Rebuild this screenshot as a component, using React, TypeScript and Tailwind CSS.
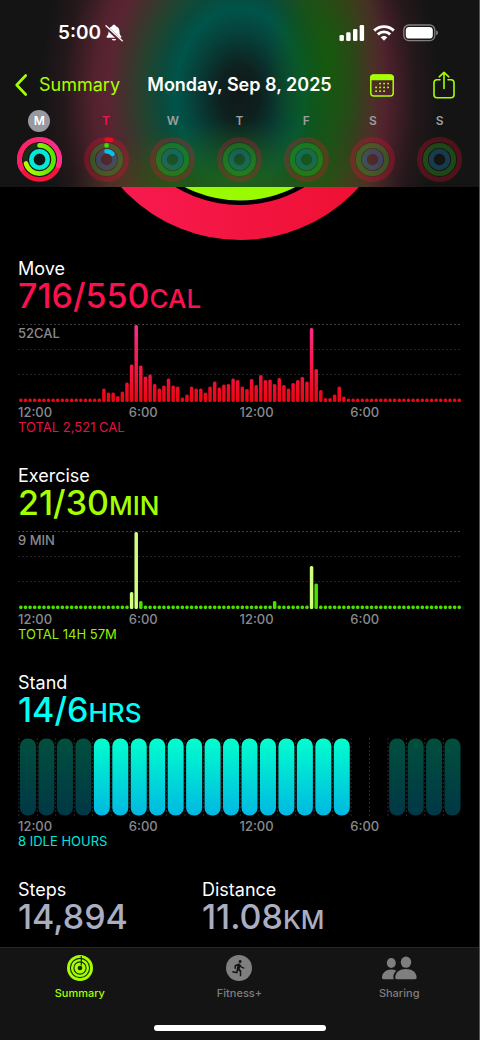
import type { ReactNode } from "react";
import clsx from "clsx";
import { MdDirectionsRun } from "react-icons/md";

const IDLE = 3.4;
const CHART_W = 443;
const CHART_H = 78;
const PITCH = CHART_W / 96;

const moveBars: number[] = [
  ...Array(18).fill(IDLE),
  13.5, 9.5, 9.5, 6, 10.5, 19.5, 37.5, 77, 36.5, 25.5, 27.5, 18, 13.5, 16.5,
  23.5, 16.5, 15.5, 4.5, 7.5, 15.5, 13.5, 13.5, 9.5, 15.5, 20.5, 14.5, 17.5,
  18, 23.5, 22, 15.5, 13, 23, 17, 27, 22, 22.5, 18, 24, 17, 13.5, 19, 22, 25,
  20.5, 74, 33, 12, 4, 4, 7.5, 15.5, 5.5,
  ...Array(25).fill(IDLE),
];

const exerciseValues: Record<number, number> = {
  24: 17,
  25: 77,
  26: 8,
  55: 8,
  63: 43,
  64: 25.5,
};
const exerciseBars = Array.from({ length: 96 }, (_, i) => exerciseValues[i] ?? IDLE);
const briskBars = [24, 25, 63];

type StandHour = "idle" | "stood" | "none";
const standHours: StandHour[] = [
  ...Array(4).fill("idle"),
  ...Array(14).fill("stood"),
  ...Array(2).fill("none"),
  ...Array(4).fill("idle"),
];

interface Day {
  letter: string;
  move: number;
  exercise: number;
  stand: number;
  selected?: boolean;
  today?: boolean;
}

const days: Day[] = [
  { letter: "M", move: 1.3, exercise: 0.7, stand: 1, selected: true },
  { letter: "T", move: 0.038, exercise: 0.001, stand: 0.13, today: true },
  { letter: "W", move: 0, exercise: 0, stand: 0 },
  { letter: "T", move: 0, exercise: 0, stand: 0 },
  { letter: "F", move: 0, exercise: 0, stand: 0 },
  { letter: "S", move: 0, exercise: 0, stand: 0 },
  { letter: "S", move: 0, exercise: 0, stand: 0 },
];

function Arc({ r, value, color }: { r: number; value: number; color: string }) {
  if (value <= 0) return null;
  const length = 2 * Math.PI * r;
  return (
    <circle
      cx="22.5"
      cy="22.5"
      r={r}
      fill="none"
      stroke={color}
      strokeWidth="4.6"
      strokeLinecap="round"
      strokeDasharray={`${Math.min(value, 1) * length} ${length}`}
      transform="rotate(-90 22.5 22.5)"
    />
  );
}

function MiniRings({ day }: { day: Day }) {
  const full = day.selected;
  return (
    <svg viewBox="0 0 45 45" className="size-[45px]" aria-hidden="true">
      <defs>
        <linearGradient id="miniMove" x1="1" y1="0.5" x2="0" y2="0.5">
          <stop offset="0" stopColor="#ff2d8c" />
          <stop offset="1" stopColor="#ff1f66" />
        </linearGradient>
        {/* strokes are rotated by -90deg, so y runs left to right on screen */}
        <linearGradient id="miniExercise" x1="0" y1="0" x2="0" y2="1">
          <stop offset="0" stopColor="#b4ff00" />
          <stop offset="1" stopColor="#55e600" />
        </linearGradient>
      </defs>
      <circle cx="22.5" cy="22.5" r="20" fill="none" stroke="#e8102f" strokeWidth="5" opacity="0.28" />
      <circle cx="22.5" cy="22.5" r="14.1" fill="none" stroke="#3bdc1e" strokeWidth="5" opacity={full ? 0.14 : 0.26} />
      <circle cx="22.5" cy="22.5" r="8.2" fill="none" stroke="#1ca0d8" strokeWidth="5" opacity="0.28" />
      {full ? (
        <>
          <Arc r={20} value={1} color="#f5143c" />
          <path
            d="M4.5 31.2A20 20 0 1 1 41.5 28.7"
            fill="none"
            stroke="url(#miniMove)"
            strokeWidth="5"
            strokeLinecap="round"
          />
        </>
      ) : (
        <Arc r={20} value={day.move} color="#f00a1e" />
      )}
      <Arc r={14.1} value={day.exercise} color={full ? "url(#miniExercise)" : "#3fdc00"} />
      <Arc r={8.2} value={day.stand} color={full ? "#00ead6" : "#00c3e6"} />
    </svg>
  );
}

function BigRing() {
  return (
    <svg viewBox="0 267 320 53" className="h-[53px] w-80 self-center" aria-hidden="true">
      <defs>
        <linearGradient id="bigMove" x1="0" y1="0" x2="1" y2="0">
          <stop offset="0" stopColor="#f81b52" />
          <stop offset="1" stopColor="#ee0f30" />
        </linearGradient>
      </defs>
      <circle cx="160" cy="160" r="142.5" fill="none" stroke="url(#bigMove)" strokeWidth="35" />
      <circle cx="160" cy="160" r="103" fill="none" stroke="#98fb00" strokeWidth="35" />
    </svg>
  );
}

function StatusBar() {
  return (
    <div className="flex h-[66px] items-center justify-between pl-[58px] pr-10 text-white">
      <div className="flex items-center gap-1">
        <span className="text-[19px] font-semibold leading-6">5:00</span>
        <svg viewBox="0 0 18 18" className="size-[18px]" aria-label="Silent">
          <path
            d="M9 .8c-1 0-1.700.6-1.900 1.500C4.700 3 3.500 5 3.500 7.500c0 2.600-.6 3.700-1.700 4.700-.5.5-.2 1.600.7 1.600h13c.9 0 1.200-1.100.7-1.600-1.100-1-1.700-2.100-1.700-4.700 0-2.500-1.200-4.500-3.600-5.200C10.700 1.400 10 .8 9 .8zM6.700 14.900a2.400 2.400 0 0 0 4.600 0z"
            fill="#fff"
          />
          <path d="M.5 2.500 16.500 17.500" stroke="#592531" strokeWidth="3.400" />
          <path d="M1 1.800 17.200 16.800" stroke="#fff" strokeWidth="1.300" strokeLinecap="round" />
        </svg>
      </div>
      <div className="flex items-center gap-2">
        <svg viewBox="0 0 26 16" className="h-4 w-[26px]" fill="#fff" aria-label="Signal">
          <rect x="0.500" y="10" width="4.400" height="6" rx="1.300" />
          <rect x="7.200" y="7.300" width="4.400" height="8.700" rx="1.300" />
          <rect x="14" y="4" width="4.400" height="12" rx="1.300" />
          <rect x="20.700" y="0" width="4.400" height="16" rx="1.300" />
        </svg>
        <svg viewBox="0 0 22 16" className="h-4 w-[22px]" fill="none" stroke="#fff" strokeWidth="2.900" aria-label="Wi-Fi">
          <path d="M1.200 5.600a14 14 0 0 1 19.600 0" />
          <path d="M4.800 9.400a8.900 8.900 0 0 1 12.400 0" />
          <path d="M11 15.700 7.700 12.300a4.800 4.800 0 0 1 6.600 0z" fill="#fff" stroke="none" />
        </svg>
        <svg viewBox="0 0 36 18" className="h-[18px] w-9" aria-label="Battery">
          <rect x="0.800" y="1" width="31" height="15.600" rx="5" fill="none" stroke="#fff" strokeOpacity="0.45" strokeWidth="1.300" />
          <rect x="2.800" y="3" width="27" height="11.600" rx="3.400" fill="#fff" />
          <path d="M33.200 6.300v5c1-.4 1.700-1.300 1.700-2.500s-.7-2.100-1.700-2.500z" fill="#fff" fillOpacity="0.5" />
        </svg>
      </div>
    </div>
  );
}

const calendarDots = [
  [9.2, 9.5],
  [13.2, 9.5],
  [17.2, 9.5],
  [5.2, 13.3],
  [9.2, 13.3],
  [13.2, 13.3],
  [17.2, 13.3],
  [5.2, 17.1],
  [9.2, 17.1],
  [13.2, 17.1],
];

function CalendarIcon() {
  return (
    <svg viewBox="0 0 24 23" className="h-[23px] w-6" aria-hidden="true">
      <rect x="0.800" y="1" width="22.400" height="21" rx="3" fill="none" stroke="#a6ff00" strokeWidth="1.500" />
      <path d="M.2 6.200V3.800A3.400 3.400 0 0 1 3.600.4h16.800a3.400 3.400 0 0 1 3.400 3.400v2.400z" fill="#a6ff00" />
      {calendarDots.map(([x, y]) => (
        <rect key={`${x}-${y}`} x={x} y={y - 0.8} width="1.800" height="1.800" rx="0.400" fill="#a6ff00" />
      ))}
    </svg>
  );
}

function NavBar() {
  return (
    <div className="grid h-[38px] grid-cols-[1fr_auto_1fr] items-center px-[15px]">
      <button type="button" className="flex items-center gap-3 text-[18px] leading-6 text-[#a6ff00]">
        <svg viewBox="0 0 12 22" className="h-[22px] w-3" aria-hidden="true">
          <path d="M10.700 1.500 1.700 11l9 9.500" fill="none" stroke="#a6ff00" strokeWidth="2.600" strokeLinecap="round" strokeLinejoin="round" />
        </svg>
        Summary
      </button>
      <h1 className="whitespace-nowrap text-[18px] font-semibold leading-6 text-white">Monday, Sep 8, 2025</h1>
      <div className="flex items-center justify-end gap-[39px] pr-[9px]">
        <button type="button" aria-label="Calendar">
          <CalendarIcon />
        </button>
        <button type="button" aria-label="Share">
          <svg viewBox="0 0 22 28" className="h-7 w-[22px]" fill="none" stroke="#a6ff00" strokeWidth="1.600" strokeLinecap="round" strokeLinejoin="round" aria-hidden="true">
            <path d="M7 8.800H4A3 3 0 0 0 1 11.800v12A3 3 0 0 0 4 26.800h14a3 3 0 0 0 3-3v-12a3 3 0 0 0-3-3h-3" />
            <path d="M11 17.500V1.500M6.200 5.800 11 1.300l4.800 4.500" />
          </svg>
        </button>
      </div>
    </div>
  );
}

function WeekStrip() {
  return (
    <div className="grid grid-cols-7 px-1.5 pb-[5px] pt-1.5">
      {days.map((day, i) => (
        <button key={i} type="button" className="flex flex-col items-center gap-[5px]">
          <span
            className={clsx(
              "flex size-[22px] items-center justify-center rounded-full text-[12px] font-semibold leading-4",
              day.selected && "bg-[#98989f] text-white",
              day.today && "text-[#e8174c]",
              !day.selected && !day.today && "text-[#9a9fa0]"
            )}
          >
            {day.letter}
          </span>
          <MiniRings day={day} />
        </button>
      ))}
    </div>
  );
}

function GridLines() {
  return (
    <>
      {[0.5, 25.5, 50.5].map((y, i) => (
        <line
          key={y}
          x1="0"
          x2={CHART_W}
          y1={y}
          y2={y}
          stroke={i === 0 ? "#404040" : "#262626"}
          strokeWidth="1"
          strokeDasharray="2 2"
        />
      ))}
    </>
  );
}

function Bars({ values, fill }: { values: number[]; fill: (i: number) => string }) {
  return (
    <svg viewBox={`0 0 ${CHART_W} ${CHART_H}`} className="block w-full" aria-hidden="true">
      <defs>
        <linearGradient id="moveBar" gradientUnits="userSpaceOnUse" x1="0" y1="0" x2="0" y2={CHART_H}>
          <stop offset="0" stopColor="#ff2d90" />
          <stop offset="0.5" stopColor="#f9174c" />
          <stop offset="1" stopColor="#ea0610" />
        </linearGradient>
      </defs>
      <GridLines />
      {values.map((h, i) => (
        <rect
          key={i}
          x={i * PITCH + 1.1}
          y={CHART_H - h}
          width="3.500"
          height={h}
          rx="1.500"
          fill={fill(i)}
        />
      ))}
    </svg>
  );
}

function StandChart() {
  const step = CHART_W / 24;
  return (
    <svg viewBox={`0 0 ${CHART_W} ${CHART_H}`} className="block w-full" aria-hidden="true">
      <defs>
        <linearGradient id="stood" x1="0" y1="0" x2="0" y2="1">
          <stop offset="0" stopColor="#00ffce" />
          <stop offset="1" stopColor="#00b8e2" />
        </linearGradient>
        <linearGradient id="idle" x1="0" y1="0" x2="0" y2="1">
          <stop offset="0" stopColor="#004f3e" />
          <stop offset="1" stopColor="#003846" />
        </linearGradient>
      </defs>
      {Array.from({ length: 25 }, (_, i) => (
        <line
          key={i}
          x1={i * step + 0.8}
          x2={i * step + 0.8}
          y1="0"
          y2={CHART_H}
          stroke="#282828"
          strokeWidth="1"
          strokeDasharray="2 2"
        />
      ))}
      {standHours.map(
        (hour, i) =>
          hour !== "none" && (
            <rect
              key={i}
              x={i * step + 2}
              y="0.500"
              width="16"
              height="77"
              rx="7.500"
              fill={hour === "stood" ? "url(#stood)" : "url(#idle)"}
            />
          )
      )}
    </svg>
  );
}

function Value({ value, unit, className }: { value: string; unit?: string; className: string }) {
  return (
    <p className={clsx("text-[34px] font-medium leading-[34px]", className)}>
      {value}
      {unit && <span className="text-[26px] leading-none">{unit}</span>}
    </p>
  );
}

interface MetricProps {
  title: string;
  value: string;
  unit: string;
  scale?: string;
  total: string;
  valueClass: string;
  totalClass: string;
  children: ReactNode;
}

function Metric({ title, value, unit, scale, total, valueClass, totalClass, children }: MetricProps) {
  return (
    <section>
      <h2 className="text-[18px] leading-5 text-white">{title}</h2>
      <Value value={value} unit={unit} className={valueClass} />
      <div className="relative mt-[11px]">
        {scale && (
          <span className="absolute left-0 top-0.5 text-[13px] font-medium leading-[14px] text-[#8a8a8e]">{scale}</span>
        )}
        {children}
      </div>
      <div className="mt-0.5 grid grid-cols-4 text-[13px] font-medium leading-4 text-[#8a8a8e]">
        <span>12:00</span>
        <span>6:00</span>
        <span>12:00</span>
        <span>6:00</span>
      </div>
      <p className={clsx("text-[13px] leading-[14px]", totalClass)}>{total}</p>
    </section>
  );
}

function TabBar() {
  const tab = "flex flex-col items-center gap-[5px] text-[11px] font-medium leading-[14px]";
  return (
    <nav className="sticky bottom-0 mt-auto border-t border-[#262626] bg-[#141414]">
      <div className="grid grid-cols-3 pt-[7px]">
        <button type="button" className={clsx(tab, "text-[#a6ff00]")}>
          <svg viewBox="0 0 26 26" className="size-[26px]" fill="none" aria-hidden="true">
            <circle cx="13" cy="13" r="13" fill="#a6ff00" />
            <g stroke="#1a2a08" strokeWidth="1.100">
              <circle cx="13" cy="13" r="9.600" />
              <circle cx="13" cy="13" r="6.100" />
            </g>
            <circle cx="13" cy="13" r="2.300" fill="#1a2a08" />
            <path d="M14.300 1v9.500" stroke="#1a2a08" strokeWidth="1.200" />
          </svg>
          Summary
        </button>
        <button type="button" className={clsx(tab, "text-[#7f7f7f]")}>
          <span className="flex size-[26px] items-center justify-center rounded-full bg-[#7f7f7f] text-[#141414]">
            <MdDirectionsRun size={18} />
          </span>
          Fitness+
        </button>
        <button type="button" className={clsx(tab, "text-[#7f7f7f]")}>
          <svg viewBox="0 0 36 26" className="h-[26px] w-9" fill="#7f7f7f" aria-hidden="true">
            <ellipse cx="10.300" cy="8" rx="4.500" ry="5" />
            <path d="M1 22.500c0-4.600 4.200-8 9.400-8 1.800 0 3.500.4 4.900 1.200-1.900 1.700-3 3.900-3 6.400 0 .8.200 1.500.5 2.100H2.300C1.500 24.200 1 23.500 1 22.500z" />
            <ellipse cx="25" cy="7.200" rx="5.200" ry="5.600" />
            <path d="M14.200 22.500c0-4.900 4.800-8.400 10.700-8.400s10.700 3.500 10.700 8.400c0 1-.6 1.700-1.600 1.700H15.800c-1 0-1.600-.7-1.600-1.700z" />
          </svg>
          Sharing
        </button>
      </div>
      <div className="mx-auto mb-[9px] mt-[25px] h-1.5 w-[172px] rounded-full bg-white" />
    </nav>
  );
}

export default function App() {
  return (
    <div className="flex min-h-screen flex-col border-r border-[#555] bg-black font-['Inter',sans-serif]">
      {/* frosted glow of the rings scrolled behind the header */}
      <header className="sticky top-0 z-10 bg-[radial-gradient(ellipse_60px_190px_at_calc(50%_+_88px)_60px,rgb(20_95_0/0.75),rgb(20_95_0/0.45)_50%,transparent),radial-gradient(ellipse_170px_80px_at_calc(50%_-_5px)_200px,rgb(45_100_0/0.85),transparent),radial-gradient(ellipse_200px_270px_at_50%_95px,#101918_0%,#0e201e_10%,#06433c_24%,#00544a_32%,#0a4a3c_39%,#24432f_48%,#43302d_58%,#5a2431_66%,#52222e_73%,#24181b_88%,#141414_100%)]">
        <StatusBar />
        <NavBar />
        <WeekStrip />
      </header>

      <BigRing />

      <main className="flex flex-col gap-8 px-[18px] pb-[13px] pt-[19px]">
        <Metric title="Move" value="716/550" unit="CAL" scale="52CAL" total="TOTAL 2,521 CAL" valueClass="text-[#fa114f]" totalClass="text-[#e3104a]">
          <Bars values={moveBars} fill={() => "url(#moveBar)"} />
        </Metric>
        <Metric title="Exercise" value="21/30" unit="MIN" scale="9 MIN" total="TOTAL 14H 57M" valueClass="text-[#a6ff00]" totalClass="text-[#9af000]">
          <Bars values={exerciseBars} fill={(i) => (briskBars.includes(i) ? "#d0ff82" : "#4be000")} />
        </Metric>
        <Metric title="Stand" value="14/6" unit="HRS" total="8 IDLE HOURS" valueClass="text-[#00fff6]" totalClass="text-[#00e6dc]">
          <StandChart />
        </Metric>
        <div className="grid grid-cols-[184px_1fr]">
          <section>
            <h2 className="text-[18px] leading-5 text-white">Steps</h2>
            <Value value="14,894" className="text-[#a9afc0]" />
          </section>
          <section>
            <h2 className="text-[18px] leading-5 text-white">Distance</h2>
            <Value value="11.08" unit="KM" className="text-[#a9afc0]" />
          </section>
        </div>
      </main>

      <TabBar />
    </div>
  );
}
